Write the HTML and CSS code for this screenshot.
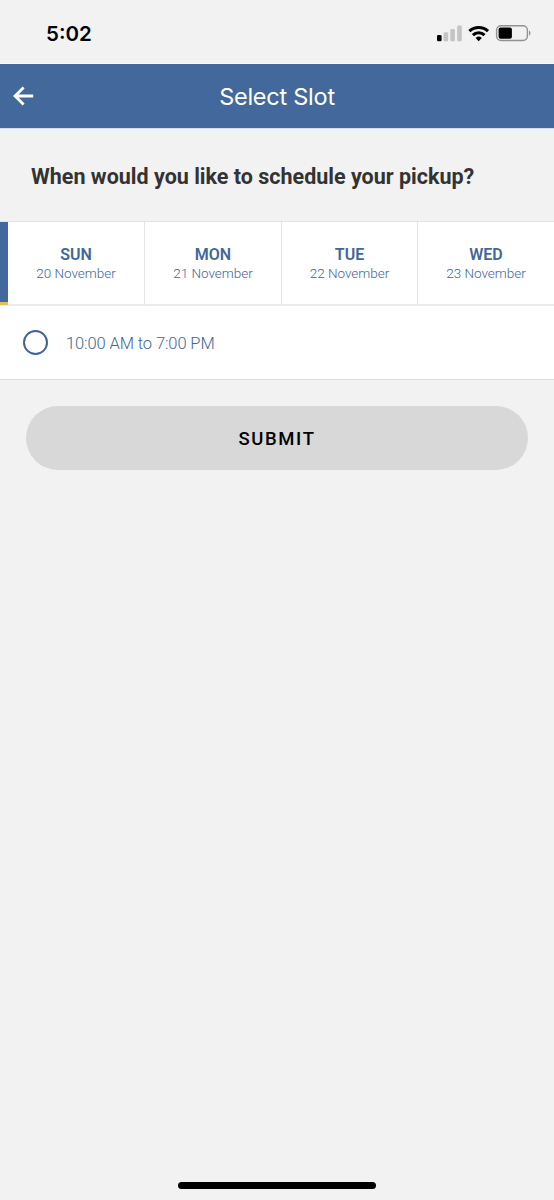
FILE: index.html
```html
<!DOCTYPE html>
<html lang="en">
<head>
<meta charset="utf-8">
<title>Select Slot</title>
<link rel="stylesheet" href="styles.css">
</head>
<body>
<div class="screen">
  <div class="status">
    <span class="clock">5:02</span>
    <svg class="indicators" width="96" height="20" viewBox="0 0 96 20">
      <rect x="1" y="10" width="4.6" height="6.2" rx="1.3" fill="#000"/>
      <g fill="#c4c4c4">
        <rect x="7.6" y="7.2" width="4.6" height="9" rx="1.2"/>
        <rect x="14.3" y="4" width="4.6" height="12.2" rx="1.2"/>
        <rect x="21.2" y="0.6" width="4.6" height="15.6" rx="1.2"/>
      </g>
      <g fill="none" stroke="#000" stroke-width="3.1">
        <path d="M33.4 6.2a13.4 13.4 0 0 1 18.6 0"/>
        <path d="M36.9 10.1a8.3 8.3 0 0 1 11.6 0"/>
      </g>
      <path d="M42.7 16.2l-3.1-3.2a4.6 4.6 0 0 1 6.2 0z" fill="#000"/>
      <rect x="60.6" y="0.7" width="30.8" height="14.8" rx="4.4" fill="none" stroke="#929292" stroke-width="1.4"/>
      <rect x="62.6" y="2.6" width="13.3" height="11.2" rx="2" fill="#000"/>
      <path d="M93 5.5v5.2a3 3 0 0 0 0-5.2z" fill="#929292"/>
    </svg>
  </div>
  <header class="header">
    <svg class="back" width="22" height="20" viewBox="0 0 22 20" fill="none" stroke="#fff" stroke-width="2.8">
      <path d="M20.2 10H2.8M10.6 1.4L2 10l8.6 8.6"/>
    </svg>
    <h1 class="title">Select Slot</h1>
  </header>
  <h2 class="question">When would you like to schedule your pickup?</h2>
  <div class="days">
    <div class="selected"></div>
    <div class="day"><b class="name">SUN</b><span class="date">20 November</span></div>
    <div class="day"><b class="name">MON</b><span class="date">21 November</span></div>
    <div class="day"><b class="name">TUE</b><span class="date">22 November</span></div>
    <div class="day"><b class="name">WED</b><span class="date">23 November</span></div>
  </div>
  <label class="slot"><span class="radio"></span><span class="time">10:00 AM to 7:00 PM</span></label>
  <button class="submit">SUBMIT</button>
  <div class="home"></div>
</div>
</body>
</html>
```
FILE: styles.css
```css
* { box-sizing: border-box; }
body { margin: 0; background: #f2f2f2; font-family: Roboto, "Liberation Sans", sans-serif; }
.screen { width: 554px; height: 1200px; display: flex; flex-direction: column; overflow: hidden; }
.status { height: 64px; flex: none; display: flex; justify-content: space-between; padding: 20px 22px 0 46px; border-bottom: 1px solid #fafafa; }
.clock { font: 600 20.5px/28px Inter, sans-serif; color: #000; }
.indicators { margin-top: 5px; }
.header { height: 65px; flex: none; display: grid; grid-template-columns: 34px 1fr 34px; align-items: center; background: #43699c; border-bottom: 1px solid #d5dde8; }
.back { margin-left: 12.5px; }
.title { margin: 2px 0 0; text-align: center; font: 400 23.5px/30px Inter, sans-serif; letter-spacing: -0.25px; color: #fff; }
.question { margin: 0; height: 92px; flex: none; padding: 34px 0 0 31px; font-size: 21.5px; line-height: 28px; font-weight: 700; color: #333; white-space: nowrap; }
.days { height: 85px; flex: none; display: grid; grid-template-columns: 8px 137px 137px 136px 136px; background: #fff; border-top: 1px solid #e2e2e2; border-bottom: 2px solid #ececec; }
.selected { height: 83px; background: #43699c; border-bottom: 3px solid #e3bd62; }
.day { display: flex; flex-direction: column; align-items: center; padding-top: 23px; border-right: 1px solid #e5e5e5; }
.day:last-child { border-right: 0; }
.name { font-size: 16px; line-height: 19px; font-weight: 600; color: #43669a; }
.date { font-size: 13.5px; line-height: 19px; font-weight: 300; color: #43669a; }
.slot { height: 74px; flex: none; display: flex; align-items: center; gap: 18px; padding-left: 23px; background: #fff; border-bottom: 1px solid #dedede; }
.radio { width: 25px; height: 25px; border: 2px solid #42629a; border-radius: 50%; }
.time { font-size: 16.5px; line-height: 22px; font-weight: 300; letter-spacing: -0.1px; color: #43669a; padding-top: 3px; }
.submit { flex: none; margin: 26px 26px 0; height: 64px; border: 0; border-radius: 32px; background: #d8d8d8; color: #000; font: 500 18.5px/24px Roboto, sans-serif; letter-spacing: 1.6px; padding: 2px 0 0; }
.home { width: 198px; height: 7px; margin: auto auto 11px 178px; border-radius: 4px; background: #000; }
```
